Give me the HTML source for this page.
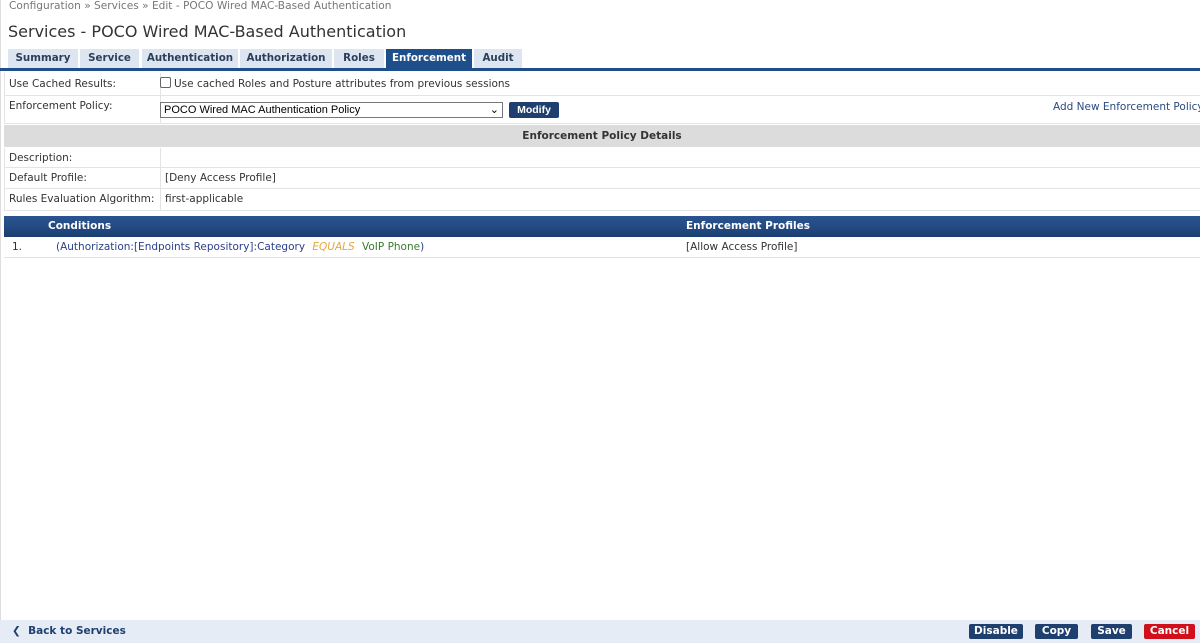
<!DOCTYPE html>
<html><head><style>
body{margin:0;width:1200px;height:643px;overflow:hidden;background:#fff;font-family:"DejaVu Sans",Verdana,sans-serif;font-size:10.5px;color:#333;position:relative}
.a{position:absolute}
.tab{position:absolute;top:49px;height:19px;background:#dde6f0;font-weight:bold;color:#2b3f5c;font-size:10.3px;line-height:19px;text-align:center}
.row{position:absolute;left:4px;right:0;border-bottom:1px solid #e3e3e3;border-left:1px solid #e3e3e3}
.lbl{position:absolute;left:4px}
.vsep{position:absolute;left:155px;top:0;bottom:0;border-left:1px solid #e3e3e3}
.btn{position:absolute;top:624px;height:15px;background:#1f3f6e;color:#fff;font-weight:bold;font-size:10.5px;line-height:15px;text-align:center;border-radius:2px}
</style></head><body>
<div class="a" style="left:0;top:0;bottom:0;width:1px;background:#ddd"></div>
<div class="a" style="left:9px;top:0;color:#777;font-size:10.6px">Configuration » Services » Edit - POCO Wired MAC-Based Authentication</div>
<div class="a" style="left:8px;top:22px;font-size:16px;color:#333">Services - POCO Wired MAC-Based Authentication</div>
<div class="tab" style="left:8px;width:70px">Summary</div>
<div class="tab" style="left:80px;width:59px">Service</div>
<div class="tab" style="left:142px;width:96px">Authentication</div>
<div class="tab" style="left:240px;width:92px">Authorization</div>
<div class="tab" style="left:334px;width:50px">Roles</div>
<div class="tab" style="left:386px;width:86px;background:#1f4f8a;color:#fff">Enforcement</div>
<div class="tab" style="left:474px;width:48px">Audit</div>
<div class="a" style="left:0;right:0;top:68px;height:3px;background:#1f4f8a"></div>

<div class="row" style="top:73px;height:22px"><div class="lbl" style="top:5px">Use Cached Results:</div><div class="vsep"></div>
<div class="a" style="left:155px;top:4px;width:9px;height:9px;border:1px solid #666;border-radius:2px"></div><div class="a" style="left:169px;top:5px">Use cached Roles and Posture attributes from previous sessions</div></div>
<div class="row" style="top:96px;height:27px"><div class="lbl" style="top:4px">Enforcement Policy:</div><div class="vsep"></div>
<div class="a" style="left:155px;top:6px;width:338px;height:14px;border:1px solid #777;font-family:'Liberation Sans',Arial,sans-serif;font-size:11px;line-height:14px;padding-left:3px;color:#000">POCO Wired MAC Authentication Policy<span style="position:absolute;right:3px;top:0">&#8964;</span></div>
<div class="a" style="left:504px;top:6px;width:50px;height:16px;background:#1f3f6e;color:#fff;font-weight:bold;text-align:center;line-height:16px;border-radius:2px;font-family:'Liberation Sans',Arial,sans-serif">Modify</div>
<div class="a" style="left:1048px;top:5px;color:#2b4a80;white-space:nowrap">Add New Enforcement Policy</div></div>
<div class="a" style="left:4px;right:0;top:125px;height:22px;background:#dcdcdc;text-align:center;font-weight:bold;line-height:22px">Enforcement Policy Details</div>
<div class="row" style="top:148px;height:19px"><div class="lbl" style="top:4px">Description:</div><div class="vsep"></div></div>
<div class="row" style="top:168px;height:20px"><div class="lbl" style="top:4px">Default Profile:</div><div class="vsep"></div><div class="a" style="left:160px;top:4px">[Deny Access Profile]</div></div>
<div class="row" style="top:189px;height:21px"><div class="lbl" style="top:4px">Rules Evaluation Algorithm:</div><div class="vsep"></div><div class="a" style="left:160px;top:4px">first-applicable</div></div>
<div class="a" style="left:4px;right:0;top:216px;height:21px;background:linear-gradient(#2a5592,#1c3f72);color:#fff;font-weight:bold;line-height:20px"><span class="a" style="left:44px">Conditions</span><span class="a" style="left:682px">Enforcement Profiles</span></div>
<div class="row" style="top:237px;height:20px;border-left:none"><div class="a" style="left:8px;top:4px">1.</div>
<div class="a" style="left:52px;top:4px;color:#2b3f8a;white-space:nowrap">(Authorization:[Endpoints Repository]:Category <i style="color:#e0a840;margin:0 4px">EQUALS</i> <span style="color:#3a7a30">VoIP Phone</span>)</div>
<div class="a" style="left:682px;top:4px">[Allow Access Profile]</div></div>

<div class="a" style="left:0;right:0;top:620px;height:23px;background:#e6ecf6"></div>
<div class="a" style="left:12px;top:625px;color:#1f3f6e;font-weight:bold;font-size:10.5px">&#10094;&nbsp; Back to Services</div>
<div class="btn" style="left:969px;width:54px">Disable</div>
<div class="btn" style="left:1035px;width:43px">Copy</div>
<div class="btn" style="left:1091px;width:41px">Save</div>
<div class="btn" style="left:1144px;width:51px;background:#d0101a">Cancel</div>
</body></html>
